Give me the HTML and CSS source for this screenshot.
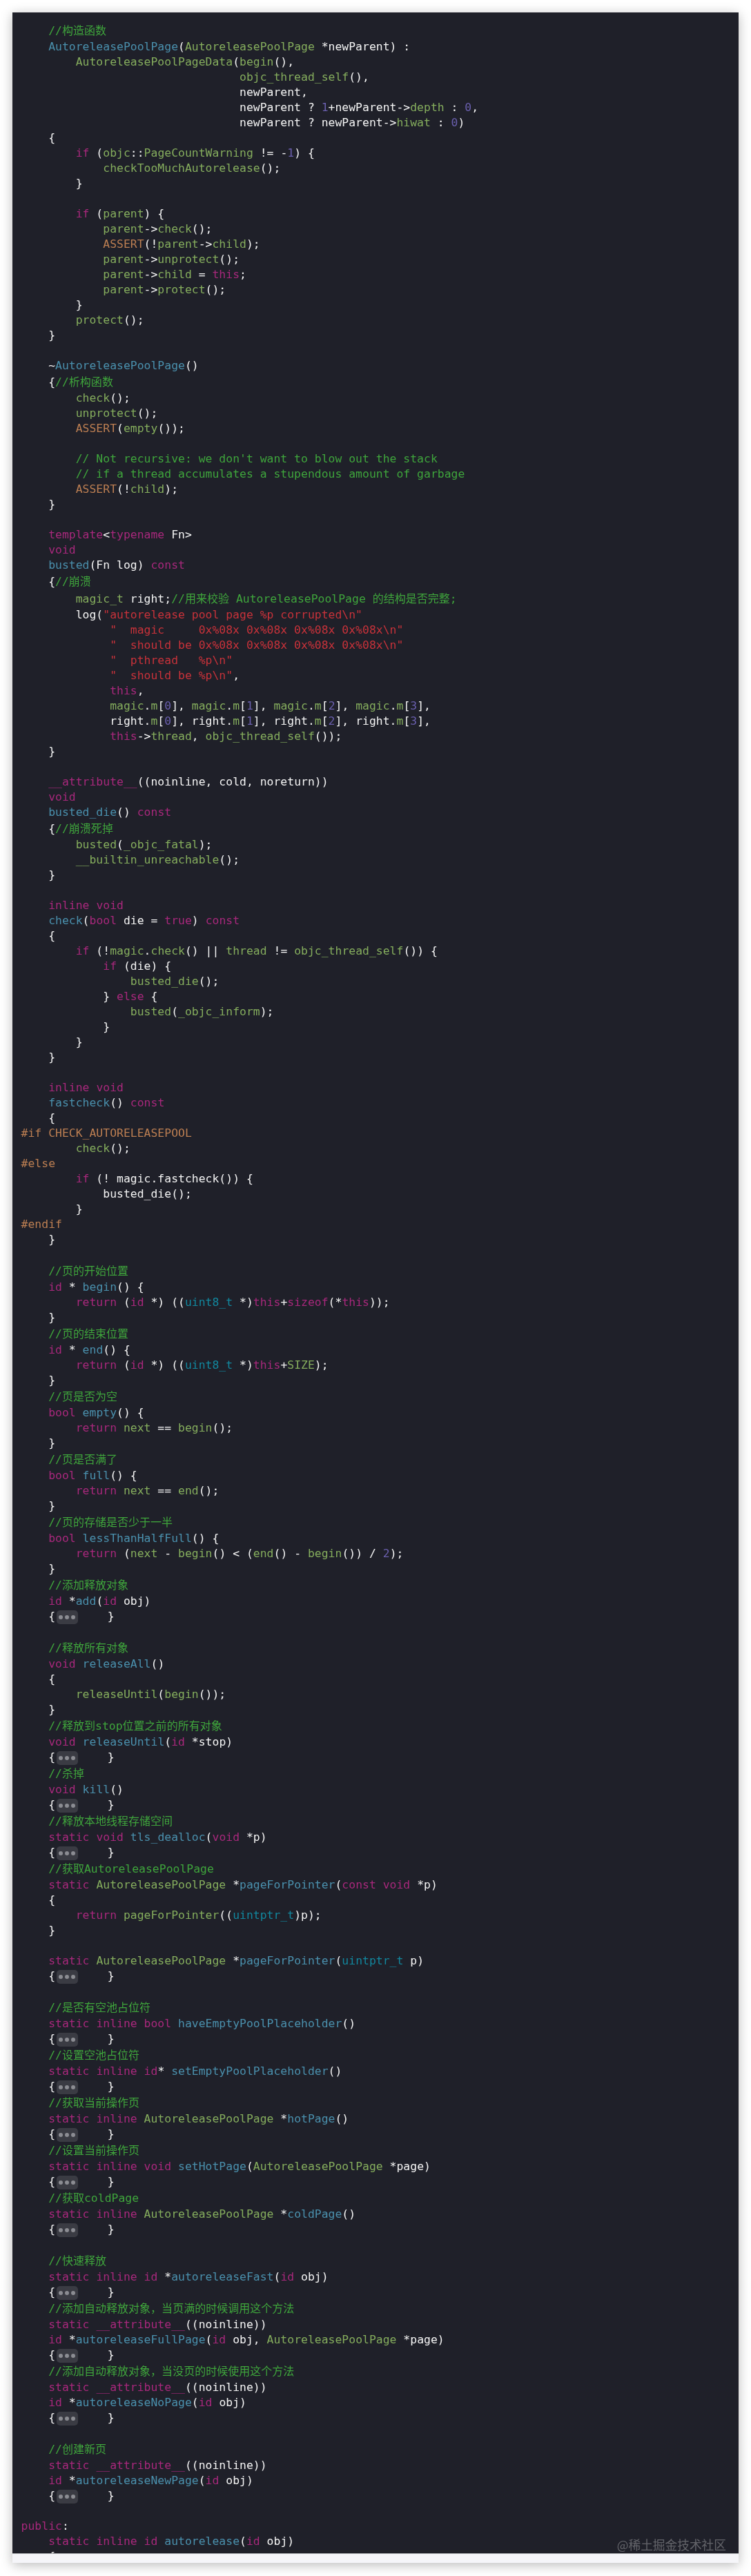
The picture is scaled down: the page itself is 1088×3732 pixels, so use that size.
FILE: index.html
```html
<!DOCTYPE html>
<html lang="zh">
<head>
<meta charset="utf-8">
<title>AutoreleasePoolPage</title>
<link rel="stylesheet" href="styles.css">
</head>
<body>
<main class="shot">
<div class="panel">
<pre class="code"><code><span class="l zl">    <i class="c">//<b>构造函数</b></i></span>
<span class="l">    <i class="f">AutoreleasePoolPage</i>(<i class="p">AutoreleasePoolPage</i> *newParent) :</span>
<span class="l">        <i class="p">AutoreleasePoolPageData</i>(<i class="p">begin</i>(),</span>
<span class="l">                                <i class="p">objc_thread_self</i>(),</span>
<span class="l">                                newParent,</span>
<span class="l">                                newParent ? <i class="n">1</i>+newParent-&gt;<i class="p">depth</i> : <i class="n">0</i>,</span>
<span class="l">                                newParent ? newParent-&gt;<i class="p">hiwat</i> : <i class="n">0</i>)</span>
<span class="l">    {</span>
<span class="l">        <i class="k">if</i> (<i class="p">objc</i>::<i class="p">PageCountWarning</i> != -<i class="n">1</i>) {</span>
<span class="l">            <i class="p">checkTooMuchAutorelease</i>();</span>
<span class="l">        }</span>
<span class="l"> </span>
<span class="l">        <i class="k">if</i> (<i class="p">parent</i>) {</span>
<span class="l">            <i class="p">parent</i>-&gt;<i class="p">check</i>();</span>
<span class="l">            <i class="m">ASSERT</i>(!<i class="p">parent</i>-&gt;<i class="p">child</i>);</span>
<span class="l">            <i class="p">parent</i>-&gt;<i class="p">unprotect</i>();</span>
<span class="l">            <i class="p">parent</i>-&gt;<i class="p">child</i> = <i class="k">this</i>;</span>
<span class="l">            <i class="p">parent</i>-&gt;<i class="p">protect</i>();</span>
<span class="l">        }</span>
<span class="l">        <i class="p">protect</i>();</span>
<span class="l">    }</span>
<span class="l"> </span>
<span class="l">    ~<i class="f">AutoreleasePoolPage</i>()</span>
<span class="l zl">    {<i class="c">//<b>析构函数</b></i></span>
<span class="l">        <i class="p">check</i>();</span>
<span class="l">        <i class="p">unprotect</i>();</span>
<span class="l">        <i class="m">ASSERT</i>(<i class="p">empty</i>());</span>
<span class="l"> </span>
<span class="l">        <i class="c">// Not recursive: we don't want to blow out the stack</i></span>
<span class="l">        <i class="c">// if a thread accumulates a stupendous amount of garbage</i></span>
<span class="l">        <i class="m">ASSERT</i>(!<i class="p">child</i>);</span>
<span class="l">    }</span>
<span class="l"> </span>
<span class="l">    <i class="k">template</i>&lt;<i class="k">typename</i> Fn&gt;</span>
<span class="l">    <i class="k">void</i></span>
<span class="l">    <i class="f">busted</i>(Fn log) <i class="k">const</i></span>
<span class="l zl">    {<i class="c">//<b>崩溃</b></i></span>
<span class="l zl">        <i class="p">magic_t</i> right;<i class="c">//<b>用来校验</b> AutoreleasePoolPage <b>的结构是否完整</b>;</i></span>
<span class="l">        log(<i class="s">"autorelease pool page %p corrupted\n"</i></span>
<span class="l">             <i class="s">"  magic     0x%08x 0x%08x 0x%08x 0x%08x\n"</i></span>
<span class="l">             <i class="s">"  should be 0x%08x 0x%08x 0x%08x 0x%08x\n"</i></span>
<span class="l">             <i class="s">"  pthread   %p\n"</i></span>
<span class="l">             <i class="s">"  should be %p\n"</i>,</span>
<span class="l">             <i class="k">this</i>,</span>
<span class="l">             <i class="p">magic</i>.<i class="p">m</i>[<i class="n">0</i>], <i class="p">magic</i>.<i class="p">m</i>[<i class="n">1</i>], <i class="p">magic</i>.<i class="p">m</i>[<i class="n">2</i>], <i class="p">magic</i>.<i class="p">m</i>[<i class="n">3</i>],</span>
<span class="l">             right.<i class="p">m</i>[<i class="n">0</i>], right.<i class="p">m</i>[<i class="n">1</i>], right.<i class="p">m</i>[<i class="n">2</i>], right.<i class="p">m</i>[<i class="n">3</i>],</span>
<span class="l">             <i class="k">this</i>-&gt;<i class="p">thread</i>, <i class="p">objc_thread_self</i>());</span>
<span class="l">    }</span>
<span class="l"> </span>
<span class="l">    <i class="k">__attribute__</i>((noinline, cold, noreturn))</span>
<span class="l">    <i class="k">void</i></span>
<span class="l">    <i class="f">busted_die</i>() <i class="k">const</i></span>
<span class="l zl">    {<i class="c">//<b>崩溃死掉</b></i></span>
<span class="l">        <i class="p">busted</i>(<i class="p">_objc_fatal</i>);</span>
<span class="l">        <i class="p">__builtin_unreachable</i>();</span>
<span class="l">    }</span>
<span class="l"> </span>
<span class="l">    <i class="k">inline</i> <i class="k">void</i></span>
<span class="l">    <i class="f">check</i>(<i class="k">bool</i> die = <i class="k">true</i>) <i class="k">const</i></span>
<span class="l">    {</span>
<span class="l">        <i class="k">if</i> (!<i class="p">magic</i>.<i class="p">check</i>() || <i class="p">thread</i> != <i class="p">objc_thread_self</i>()) {</span>
<span class="l">            <i class="k">if</i> (die) {</span>
<span class="l">                <i class="p">busted_die</i>();</span>
<span class="l">            } <i class="k">else</i> {</span>
<span class="l">                <i class="p">busted</i>(<i class="p">_objc_inform</i>);</span>
<span class="l">            }</span>
<span class="l">        }</span>
<span class="l">    }</span>
<span class="l"> </span>
<span class="l">    <i class="k">inline</i> <i class="k">void</i></span>
<span class="l">    <i class="f">fastcheck</i>() <i class="k">const</i></span>
<span class="l">    {</span>
<span class="l"><i class="m">#if CHECK_AUTORELEASEPOOL</i></span>
<span class="l">        <i class="p">check</i>();</span>
<span class="l"><i class="m">#else</i></span>
<span class="l">        <i class="k">if</i> (! magic.fastcheck()) {</span>
<span class="l">            busted_die();</span>
<span class="l">        }</span>
<span class="l"><i class="m">#endif</i></span>
<span class="l">    }</span>
<span class="l"> </span>
<span class="l zl">    <i class="c">//<b>页的开始位置</b></i></span>
<span class="l">    <i class="k">id</i> * <i class="f">begin</i>() {</span>
<span class="l">        <i class="k">return</i> (<i class="k">id</i> *) ((<i class="t">uint8_t</i> *)<i class="k">this</i>+<i class="k">sizeof</i>(*<i class="k">this</i>));</span>
<span class="l">    }</span>
<span class="l zl">    <i class="c">//<b>页的结束位置</b></i></span>
<span class="l">    <i class="k">id</i> * <i class="f">end</i>() {</span>
<span class="l">        <i class="k">return</i> (<i class="k">id</i> *) ((<i class="t">uint8_t</i> *)<i class="k">this</i>+<i class="p">SIZE</i>);</span>
<span class="l">    }</span>
<span class="l zl">    <i class="c">//<b>页是否为空</b></i></span>
<span class="l">    <i class="k">bool</i> <i class="f">empty</i>() {</span>
<span class="l">        <i class="k">return</i> <i class="p">next</i> == <i class="p">begin</i>();</span>
<span class="l">    }</span>
<span class="l zl">    <i class="c">//<b>页是否满了</b></i></span>
<span class="l">    <i class="k">bool</i> <i class="f">full</i>() {</span>
<span class="l">        <i class="k">return</i> <i class="p">next</i> == <i class="p">end</i>();</span>
<span class="l">    }</span>
<span class="l zl">    <i class="c">//<b>页的存储是否少于一半</b></i></span>
<span class="l">    <i class="k">bool</i> <i class="f">lessThanHalfFull</i>() {</span>
<span class="l">        <i class="k">return</i> (<i class="p">next</i> - <i class="p">begin</i>() &lt; (<i class="p">end</i>() - <i class="p">begin</i>()) / <i class="n">2</i>);</span>
<span class="l">    }</span>
<span class="l zl">    <i class="c">//<b>添加释放对象</b></i></span>
<span class="l">    <i class="k">id</i> *<i class="f">add</i>(<i class="k">id</i> obj)</span>
<span class="l">    {<em class="fold"><u></u><u></u><u></u></em>}</span>
<span class="l"> </span>
<span class="l zl">    <i class="c">//<b>释放所有对象</b></i></span>
<span class="l">    <i class="k">void</i> <i class="f">releaseAll</i>()</span>
<span class="l">    {</span>
<span class="l">        <i class="p">releaseUntil</i>(<i class="p">begin</i>());</span>
<span class="l">    }</span>
<span class="l zl">    <i class="c">//<b>释放到</b>stop<b>位置之前的所有对象</b></i></span>
<span class="l">    <i class="k">void</i> <i class="f">releaseUntil</i>(<i class="k">id</i> *stop)</span>
<span class="l">    {<em class="fold"><u></u><u></u><u></u></em>}</span>
<span class="l zl">    <i class="c">//<b>杀掉</b></i></span>
<span class="l">    <i class="k">void</i> <i class="f">kill</i>()</span>
<span class="l">    {<em class="fold"><u></u><u></u><u></u></em>}</span>
<span class="l zl">    <i class="c">//<b>释放本地线程存储空间</b></i></span>
<span class="l">    <i class="k">static</i> <i class="k">void</i> <i class="f">tls_dealloc</i>(<i class="k">void</i> *p)</span>
<span class="l">    {<em class="fold"><u></u><u></u><u></u></em>}</span>
<span class="l zl">    <i class="c">//<b>获取</b>AutoreleasePoolPage</i></span>
<span class="l">    <i class="k">static</i> <i class="p">AutoreleasePoolPage</i> *<i class="f">pageForPointer</i>(<i class="k">const</i> <i class="k">void</i> *p)</span>
<span class="l">    {</span>
<span class="l">        <i class="k">return</i> <i class="p">pageForPointer</i>((<i class="t">uintptr_t</i>)p);</span>
<span class="l">    }</span>
<span class="l"> </span>
<span class="l">    <i class="k">static</i> <i class="p">AutoreleasePoolPage</i> *<i class="f">pageForPointer</i>(<i class="t">uintptr_t</i> p)</span>
<span class="l">    {<em class="fold"><u></u><u></u><u></u></em>}</span>
<span class="l"> </span>
<span class="l zl">    <i class="c">//<b>是否有空池占位符</b></i></span>
<span class="l">    <i class="k">static</i> <i class="k">inline</i> <i class="k">bool</i> <i class="f">haveEmptyPoolPlaceholder</i>()</span>
<span class="l">    {<em class="fold"><u></u><u></u><u></u></em>}</span>
<span class="l zl">    <i class="c">//<b>设置空池占位符</b></i></span>
<span class="l">    <i class="k">static</i> <i class="k">inline</i> <i class="k">id</i>* <i class="f">setEmptyPoolPlaceholder</i>()</span>
<span class="l">    {<em class="fold"><u></u><u></u><u></u></em>}</span>
<span class="l zl">    <i class="c">//<b>获取当前操作页</b></i></span>
<span class="l">    <i class="k">static</i> <i class="k">inline</i> <i class="p">AutoreleasePoolPage</i> *<i class="f">hotPage</i>()</span>
<span class="l">    {<em class="fold"><u></u><u></u><u></u></em>}</span>
<span class="l zl">    <i class="c">//<b>设置当前操作页</b></i></span>
<span class="l">    <i class="k">static</i> <i class="k">inline</i> <i class="k">void</i> <i class="f">setHotPage</i>(<i class="p">AutoreleasePoolPage</i> *page)</span>
<span class="l">    {<em class="fold"><u></u><u></u><u></u></em>}</span>
<span class="l zl">    <i class="c">//<b>获取</b>coldPage</i></span>
<span class="l">    <i class="k">static</i> <i class="k">inline</i> <i class="p">AutoreleasePoolPage</i> *<i class="f">coldPage</i>()</span>
<span class="l">    {<em class="fold"><u></u><u></u><u></u></em>}</span>
<span class="l"> </span>
<span class="l zl">    <i class="c">//<b>快速释放</b></i></span>
<span class="l">    <i class="k">static</i> <i class="k">inline</i> <i class="k">id</i> *<i class="f">autoreleaseFast</i>(<i class="k">id</i> obj)</span>
<span class="l">    {<em class="fold"><u></u><u></u><u></u></em>}</span>
<span class="l zl">    <i class="c">//<b>添加自动释放对象，当页满的时候调用这个方法</b></i></span>
<span class="l">    <i class="k">static</i> <i class="k">__attribute__</i>((noinline))</span>
<span class="l">    <i class="k">id</i> *<i class="f">autoreleaseFullPage</i>(<i class="k">id</i> obj, <i class="p">AutoreleasePoolPage</i> *page)</span>
<span class="l">    {<em class="fold"><u></u><u></u><u></u></em>}</span>
<span class="l zl">    <i class="c">//<b>添加自动释放对象，当没页的时候使用这个方法</b></i></span>
<span class="l">    <i class="k">static</i> <i class="k">__attribute__</i>((noinline))</span>
<span class="l">    <i class="k">id</i> *<i class="f">autoreleaseNoPage</i>(<i class="k">id</i> obj)</span>
<span class="l">    {<em class="fold"><u></u><u></u><u></u></em>}</span>
<span class="l"> </span>
<span class="l zl">    <i class="c">//<b>创建新页</b></i></span>
<span class="l">    <i class="k">static</i> <i class="k">__attribute__</i>((noinline))</span>
<span class="l">    <i class="k">id</i> *<i class="f">autoreleaseNewPage</i>(<i class="k">id</i> obj)</span>
<span class="l">    {<em class="fold"><u></u><u></u><u></u></em>}</span>
<span class="l"> </span>
<span class="l"><i class="k">public</i>:</span>
<span class="l">    <i class="k">static</i> <i class="k">inline</i> <i class="k">id</i> <i class="f">autorelease</i>(<i class="k">id</i> obj)</span>
<span class="l">    {</span></code></pre>
<div class="mark">@稀土掘金技术社区</div>
<div class="foot"></div>
</div>
</main>
</body>
</html>
```

FILE: styles.css
```css
html, body {
  margin: 0;
  padding: 0;
  background: #fff;
}

.shot {
  height: 3732px;
  padding: 18px;
  box-sizing: border-box;
  overflow: hidden;
}

.panel {
  position: relative;
  display: flex;
  flex-direction: column;
  height: 3695px;
  background: #1f2029;
  box-shadow: 0 3px 16px rgba(0, 0, 0, 0.28);
}

.code {
  flex: 1;
  min-height: 0;
  margin: 0;
  padding: 13.5px 0 0 12.6px;
  overflow: hidden;
  color: #f4f4f4;
  font: 16.4px/22px "DejaVu Sans Mono", "Noto Sans CJK SC", monospace;
  letter-spacing: 0.02px;
  filter: blur(0.35px);
}

.code code {
  font: inherit;
  display: flex;
  flex-direction: column;
}

.l {
  display: block;
  flex: none;
  height: 22px;
  white-space: pre;
}

.zl {
  height: 25px;
  line-height: 25px;
}

.code i {
  font-style: normal;
}

.code b {
  font-family: "Noto Sans CJK SC", sans-serif;
  font-size: 16px;
  font-weight: 400;
  line-height: 22px;
}

.k { color: #a8287c; }
.c { color: #3fa53c; }
.f { color: #4a90ad; }
.p { color: #85ad5d; }
.m { color: #bd7f52; }
.s { color: #c8323a; }
.n { color: #6a5fae; }
.t { color: #12889f; }

.fold {
  display: inline-flex;
  align-items: center;
  justify-content: center;
  gap: 3px;
  box-sizing: border-box;
  width: 31px;
  height: 20px;
  margin: 2px 43px 0 1.6px;
  vertical-align: top;
  border-radius: 5px;
  background: #3a3b43;
}

.fold u {
  width: 6px;
  height: 6px;
  border-radius: 50%;
  background: #8b8c92;
}

.foot {
  flex: none;
  height: 14px;
  box-sizing: border-box;
  border-top: 1px solid #a9a9ae;
  background: #f5f5f9;
}

.mark {
  position: absolute;
  right: 18px;
  bottom: 16px;
  color: rgba(255, 255, 255, 0.3);
  font: 17.7px/22px "Noto Sans CJK SC", sans-serif;
  filter: blur(0.4px);
}
```
